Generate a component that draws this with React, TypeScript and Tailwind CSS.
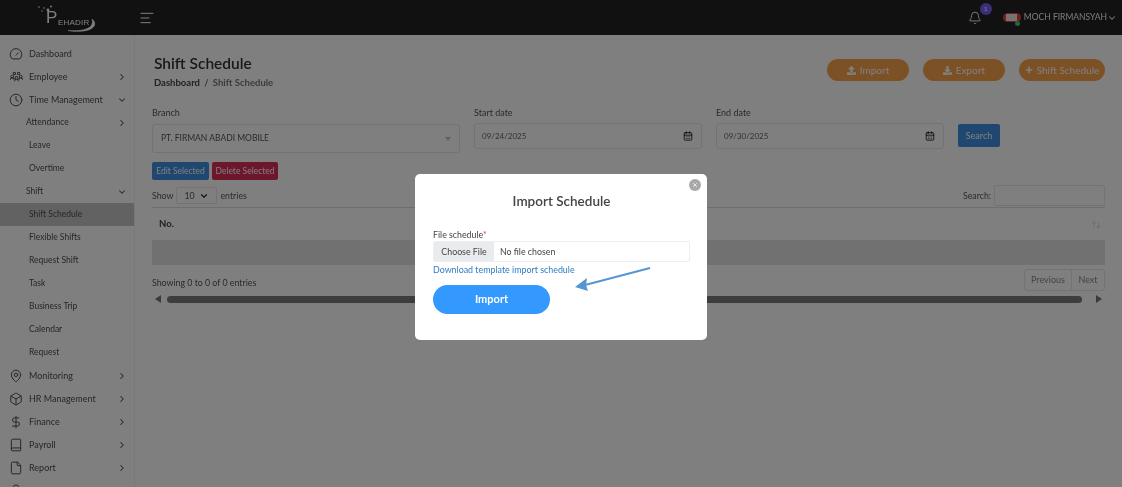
import { AlignLeft, Bell, Book, Box, Briefcase, ChevronDown, ChevronRight, Clock, DollarSign, File, MapPin, CalendarDays, X } from "lucide-react";
import { FaDownload, FaPlus, FaUpload } from "react-icons/fa";
import { LiaUsersSolid } from "react-icons/lia";
import type { ReactNode } from "react";

type MenuItem = {
  label: string;
  icon?: ReactNode;
  sub?: boolean;
  group?: boolean;
  active?: boolean;
  chevron?: "right" | "down";
};

const ic = "w-[14px] h-[14px] stroke-[1.7]";

function DashIcon() {
  return (
    <svg viewBox="0 0 24 24" className={ic} fill="none" stroke="currentColor" strokeLinecap="round" strokeLinejoin="round">
      <path d="M5 20 A10 10 0 1 1 19 20 Z" />
      <path d="M12 14 L16 10" />
    </svg>
  );
}

const menu: MenuItem[] = [
  { label: "Dashboard", icon: <DashIcon /> },
  { label: "Employee", icon: <LiaUsersSolid className="h-[15px] w-[15px]" />, chevron: "right" },
  { label: "Time Management", icon: <Clock className={ic} />, chevron: "down" },
  { label: "Attendance", group: true, chevron: "right" },
  { label: "Leave", sub: true },
  { label: "Overtime", sub: true },
  { label: "Shift", group: true, chevron: "down" },
  { label: "Shift Schedule", sub: true, active: true },
  { label: "Flexible Shifts", sub: true },
  { label: "Request Shift", sub: true },
  { label: "Task", sub: true },
  { label: "Business Trip", sub: true },
  { label: "Calendar", sub: true },
  { label: "Request", sub: true },
  { label: "Monitoring", icon: <MapPin className={ic} />, chevron: "right" },
  { label: "HR Management", icon: <Box className={ic} />, chevron: "right" },
  { label: "Finance", icon: <DollarSign className={ic} />, chevron: "right" },
  { label: "Payroll", icon: <Book className={ic} />, chevron: "right" },
  { label: "Report", icon: <File className={ic} />, chevron: "right" },
  { label: "", icon: <Briefcase className={ic} />, chevron: "right" },
];

function Sidebar() {
  return (
    <aside className="w-[135px] shrink-0 border-r border-[#f2f2f2] bg-white pt-[7px] text-[#4d4d4d]">
      {menu.map(item => (
        <div
          key={item.label || "more"}
          className={`flex h-[23px] items-center pr-[7px] ${item.sub || item.group ? "text-[8.5px]" : "text-[9px]"} ${item.active ? "bg-[#c4c4c4]" : ""} ${item.group ? "pl-[26px]" : "pl-[9px]"}`}
        >
          {!item.group && <span className="flex w-[20px] shrink-0 items-center">{item.icon}</span>}
          <span className="flex-1 truncate">{item.label}</span>
          {item.chevron === "right" && <ChevronRight className="h-[10px] w-[10px] stroke-[2.5]" />}
          {item.chevron === "down" && <ChevronDown className="h-[10px] w-[10px] stroke-[2.5]" />}
        </div>
      ))}
    </aside>
  );
}

function Logo() {
  return (
    <div className="relative h-[35px] w-[134px] shrink-0 text-white">
      <svg viewBox="0 0 134 35" className="absolute inset-0 h-full w-full">
        <circle cx="39" cy="7" r="0.8" fill="#fff" />
        <circle cx="44" cy="8" r="0.8" fill="#fff" />
        <circle cx="51" cy="6.5" r="0.9" fill="#fff" />
        <circle cx="48" cy="10" r="1.4" fill="#fff" />
        <circle cx="42" cy="11" r="0.7" fill="#fff" />
        <path d="M68 30.5 C84 32 95 28 92 19 C100 26 90 34 68 30.5Z" fill="#fff" stroke="#fff" strokeWidth="0.6" />
      </svg>
      <span className="absolute left-[46px] top-[9px] text-[17px] leading-[18px] font-['Liberation_Sans',sans-serif]">P</span>
      <span className="absolute left-[58px] top-[18px] text-[8px] leading-[10px] tracking-[0.2px] font-['Liberation_Sans',sans-serif]">EHADIR</span>
    </div>
  );
}

function Header() {
  return (
    <header className="flex h-[35px] shrink-0 items-center bg-[#222222] text-white">
      <Logo />
      <AlignLeft className="ml-[5px] h-[16px] w-[16px] stroke-[1.5]" />
      <div className="ml-auto flex items-center pr-[5px]">
        <div className="relative mr-[21px] mt-[1px]">
          <Bell className="h-[14px] w-[14px] stroke-[1.6]" />
          <span className="absolute -right-[10px] -top-[8px] flex h-[12px] w-[12px] items-center justify-center rounded-full bg-[#7a5cf0] text-[6px] leading-none">1</span>
        </div>
        <div className="relative mr-[3px] h-[9px] w-[18px] rounded-full bg-[#ee3b3b]">
          <span className="absolute left-[3px] top-[1px] h-[7px] w-[11px] bg-[#e8e8e8]" />
          <span className="absolute -bottom-[4px] right-[1px] h-[5px] w-[5px] rounded-full bg-[#3ecf6b]" />
        </div>
        <span className="text-[8.5px] text-[#f4f4f4]">MOCH FIRMANSYAH</span>
        <ChevronDown className="h-[10px] w-[10px] stroke-[2.5]" />
      </div>
    </header>
  );
}

function PillButton({ icon, label, width }: { icon: ReactNode; label: string; width: string }) {
  return (
    <button className={`flex h-[22px] items-center justify-center gap-[4px] rounded-full bg-[#f8a24c] text-[10px] text-white ${width}`}>
      {icon}
      {label}
    </button>
  );
}

function DateField({ label, value }: { label: string; value: string }) {
  return (
    <div className="w-[228px]">
      <div className="mb-[4px] text-[9px] leading-[13px] text-[#555555]">{label}</div>
      <div className="flex h-[26px] items-center justify-between rounded-[3px] border border-[#e6e6e6] pl-[7px] pr-[8px] text-[8px] text-[#666666]">
        {value}
        <CalendarDays className="h-[10px] w-[10px] text-[#111111]" />
      </div>
    </div>
  );
}

function Content() {
  return (
    <main className="flex-1 pl-[17px] pr-[17px] pt-[16px] text-[#555555]">
      <div className="flex items-start justify-between">
        <div className="pl-[2px]">
          <h1 className="text-[15.5px] leading-[24px] font-semibold text-[#333333]">Shift Schedule</h1>
          <div className="mt-[1px] text-[9.5px] leading-[13px] font-bold text-[#444444]">
            Dashboard <span className="mx-[2px] font-normal">/</span> <span className="text-[#777777]">Shift Schedule</span>
          </div>
        </div>
        <div className="mt-[8px] flex gap-[14px]">
          <PillButton icon={<FaUpload className="h-[9px] w-[9px]" />} label="Import" width="w-[82px]" />
          <PillButton icon={<FaDownload className="h-[9px] w-[9px]" />} label="Export" width="w-[82px]" />
          <PillButton icon={<FaPlus className="h-[8px] w-[8px]" />} label="Shift Schedule" width="w-[86px]" />
        </div>
      </div>

      <div className="mt-[17px] flex items-start gap-[14px]">
        <div className="w-[308px]">
          <div className="mb-[5px] text-[9px] leading-[13px]">Branch</div>
          <div className="flex h-[29px] items-center justify-between rounded-[3px] border border-[#e6e6e6] pl-[8px] pr-[8px] text-[8.5px]">
            PT. FIRMAN ABADI MOBILE
            <span className="h-0 w-0 border-x-[3.5px] border-t-[4px] border-x-transparent border-t-[#bbbbbb]" />
          </div>
        </div>
        <DateField label="Start date" value="09/24/2025" />
        <DateField label="End date" value="09/30/2025" />
        <button className="mt-[18px] h-[23px] w-[42px] rounded-[2px] bg-[#3f8ee0] text-[9px] text-white">Search</button>
      </div>

      <div className="mt-[9px] flex gap-[3px]">
        <button className="h-[18px] w-[57px] rounded-[2px] bg-[#3f8ee0] text-[8.5px] text-white">Edit Selected</button>
        <button className="h-[18px] w-[66px] rounded-[2px] bg-[#dc2f55] text-[8.5px] text-white">Delete Selected</button>
      </div>

      <div className="mt-[5px] flex items-center justify-between border-b border-[#dddddd] pb-[1px] text-[8.8px]">
        <div className="flex items-center gap-[3px]">
          Show
          <span className="flex h-[17px] w-[41px] items-center justify-between rounded-[2px] border border-[#e6e6e6] px-[7px]">
            10
            <ChevronDown className="h-[10px] w-[10px] stroke-[3] text-[#333333]" />
          </span>
          entries
        </div>
        <div className="flex items-center gap-[3px]">
          Search:
          <span className="h-[21px] w-[111px] rounded-[2px] border border-[#e6e6e6]" />
        </div>
      </div>

      <div className="flex h-[32px] items-center justify-between pl-[7px] pr-[5px] text-[9.5px] font-bold text-[#444444]">
        No.
        <span className="text-[7px] font-normal tracking-[-1px] text-[#cccccc]">↑↓</span>
      </div>
      <div className="h-[25px] bg-[#e3e3e3]" />

      <div className="mt-[4px] flex items-center justify-between text-[8.8px]">
        <span className="mt-[6px]">Showing 0 to 0 of 0 entries</span>
        <div className="flex h-[22px] rounded-[3px] border border-[#e6e6e6] text-[9px] text-[#888888]">
          <span className="flex w-[47px] items-center justify-center border-r border-[#e6e6e6]">Previous</span>
          <span className="flex w-[32px] items-center justify-center">Next</span>
        </div>
      </div>

      <div className="mt-[4px] flex h-[8px] items-center gap-[6px] px-[3px]">
        <span className="h-0 w-0 border-y-[4px] border-r-[6px] border-y-transparent border-r-[#777777]" />
        <span className="h-[7px] flex-1 rounded-full bg-[#7a7a7a]" />
        <span className="ml-[8px] h-0 w-0 border-y-[4px] border-l-[6px] border-y-transparent border-l-[#777777]" />
      </div>
    </main>
  );
}

function ImportModal() {
  return (
    <div className="absolute inset-0 flex justify-center bg-black/50 pt-[174px]">
      <div className="relative h-[166px] w-[292px] rounded-[5px] bg-white pl-[18px] pr-[17px] pt-[18px] text-[#444444]">
        <button className="absolute right-[6px] top-[5px] flex h-[12px] w-[12px] items-center justify-center rounded-full bg-[#a9a9a9] text-white">
          <X className="h-[6px] w-[6px] stroke-[3]" />
        </button>
        <h2 className="text-center text-[13.5px] leading-[18px] font-semibold text-[#444444]">Import Schedule</h2>
        <div className="mt-[18px] text-[8.8px] leading-[13px]">
          File schedule<span className="text-[#e8386a]">*</span>
        </div>
        <div className="flex h-[21px] items-center rounded-[2px] border border-[#eeeeee] text-[8.8px]">
          <span className="flex h-full w-[60px] items-center justify-center bg-[#e9ecef]">Choose File</span>
          <span className="ml-[6px]">No file chosen</span>
        </div>
        <a className="mt-[1px] block text-[8.9px] leading-[13px] text-[#2f7bc4]">Download template import schedule</a>
        <button className="mt-[9px] h-[29px] w-[117px] rounded-full bg-[#3399ff] text-[11px] font-bold text-white">Import</button>
        <svg viewBox="0 0 292 166" className="pointer-events-none absolute inset-0 h-full w-full">
          <path d="M235 94 L170 111" stroke="#5596d0" strokeWidth="2" />
          <path d="M160 113 L172 104 L171 111 L173 117Z" fill="#5596d0" />
        </svg>
      </div>
    </div>
  );
}

export default function App() {
  return (
    <div className="relative flex h-[487px] w-[1122px] flex-col overflow-hidden bg-white font-['Lato',sans-serif] blur-[0.4px]">
      <Header />
      <div className="flex min-h-0 flex-1">
        <Sidebar />
        <Content />
      </div>
      <ImportModal />
    </div>
  );
}
